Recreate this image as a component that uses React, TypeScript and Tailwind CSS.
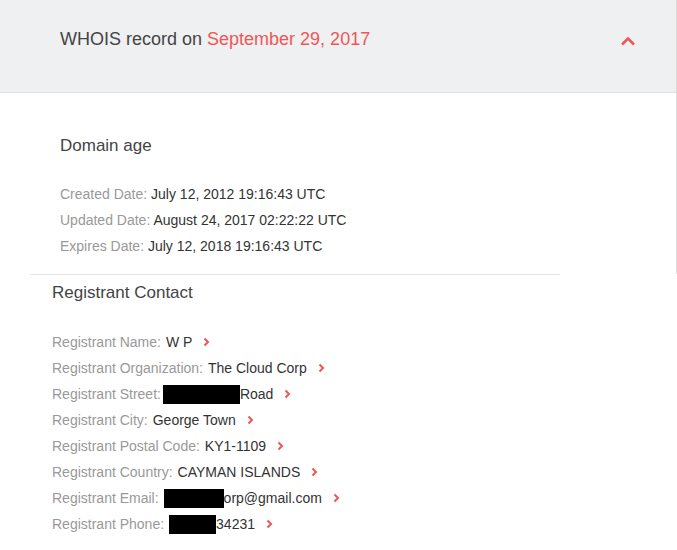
import React from "react";

const Chev = () => (
  <svg width="7" height="10" viewBox="0 0 7 10" className="ml-[11px] shrink-0" fill="none">
    <polyline points="1.5,1.5 5,5 1.5,8.5" stroke="#f05656" strokeWidth="2" />
  </svg>
);

const Box = ({ w }: { w: number }) => <span className="inline-block h-[19px] bg-black" style={{ width: w }} />;

const Row = ({ label, children, gap = 5 }: { label: string; children: React.ReactNode; gap?: number }) => (
  <div className="flex h-[26px] items-center">
    <span className="text-[#999]">{label}</span>
    <span className="flex items-center text-[#333]" style={{ marginLeft: gap }}>{children}</span>
    <Chev />
  </div>
);

export default function App() {
  return (
    <div className="w-[677px] h-[550px] bg-white overflow-hidden" style={{ fontFamily: '"Liberation Sans", Arial, sans-serif' }}>
      <div className="border-r border-[#dcdcdc] h-[274px]">
        <div className="h-[93px] bg-[#eff0f2] border-b border-[#e0e0e0] flex items-start pl-[60px] pr-[40px] pt-[28px]">
          <div className="text-[18px] leading-[22px] text-[#444] flex-1">
            WHOIS record on <span className="text-[#f05656]">September 29, 2017</span>
          </div>
          <svg width="16" height="10" viewBox="0 0 16 10" className="mt-[8px] ml-[1px]" fill="none">
            <polyline points="2,8.5 8,2.5 14,8.5" stroke="#f05656" strokeWidth="2.6" />
          </svg>
        </div>
        <div className="pl-[60px] pt-[42px]">
          <div className="text-[17px] leading-[22px] text-[#444]">Domain age</div>
          <div className="mt-[24px] text-[14px] leading-[26px]">
            <div><span className="text-[#999]">Created Date:</span> <span className="text-[#333]">July 12, 2012 19:16:43 UTC</span></div>
            <div><span className="text-[#999]">Updated Date:</span> <span className="text-[#333]">August 24, 2017 02:22:22 UTC</span></div>
            <div><span className="text-[#999]">Expires Date:</span> <span className="text-[#333]">July 12, 2018 19:16:43 UTC</span></div>
          </div>
        </div>
      </div>
      <div className="ml-[30px] w-[530px] h-[1px] bg-[#e2e2e2]" />
      <div className="pl-[52px] pt-[7px]">
        <div className="text-[17px] leading-[22px] text-[#444]">Registrant Contact</div>
        <div className="mt-[25px] text-[14px]">
          <Row label="Registrant Name:">W P</Row>
          <Row label="Registrant Organization:">The Cloud Corp</Row>
          <Row label="Registrant Street:" gap={2}><Box w={77} />Road</Row>
          <Row label="Registrant City:">George Town</Row>
          <Row label="Registrant Postal Code:">KY1-1109</Row>
          <Row label="Registrant Country:">CAYMAN ISLANDS</Row>
          <Row label="Registrant Email:"><Box w={60} />orp@gmail.com</Row>
          <Row label="Registrant Phone:"><Box w={47} />34231</Row>
        </div>
      </div>
    </div>
  );
}
